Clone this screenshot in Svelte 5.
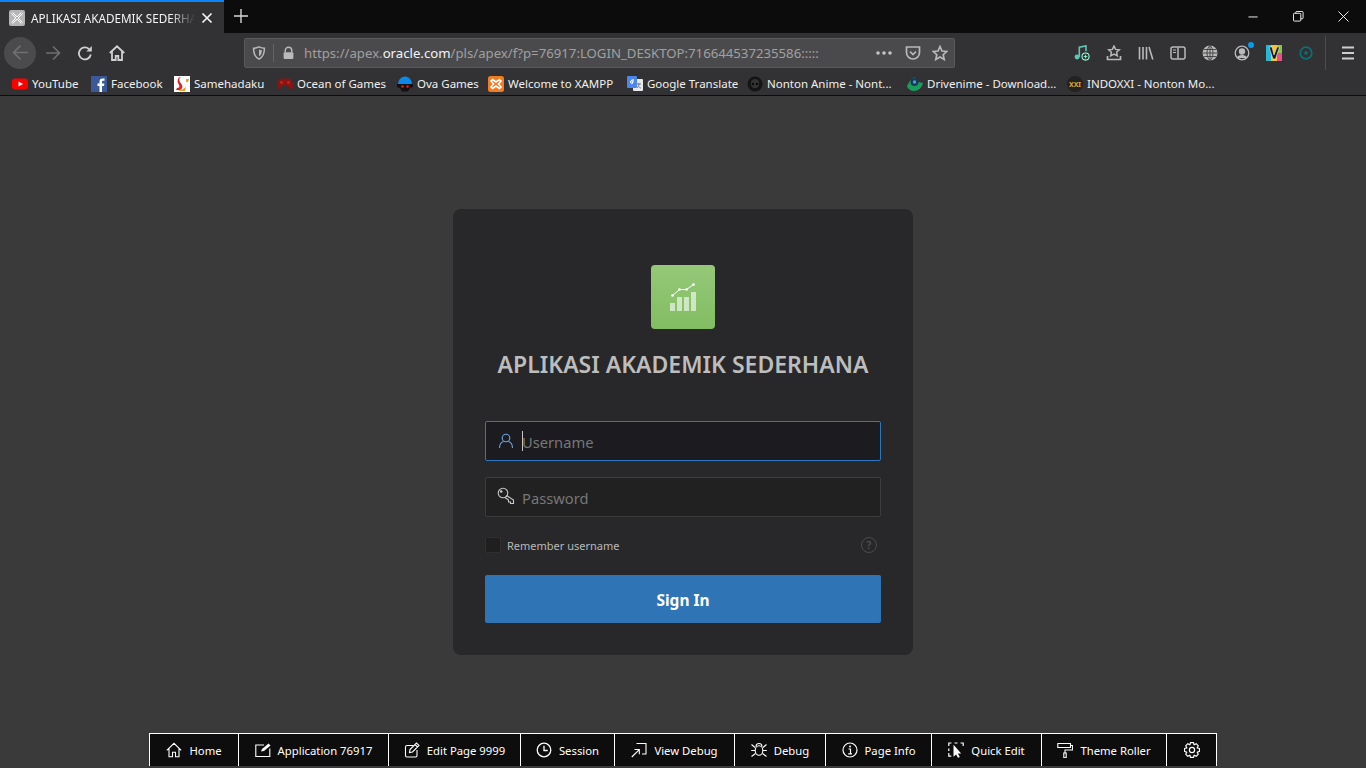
<script>
  const bookmarks = [
    { id: 'yt', name: 'YouTube', w: 67 },
    { id: 'fb', name: 'Facebook', w: 71 },
    { id: 'sm', name: 'Samehadaku', w: 91 },
    { id: 'og', name: 'Ocean of Games', w: 108 },
    { id: 'ova', name: 'Ova Games', w: 79 },
    { id: 'xa', name: 'Welcome to XAMPP', w: 127 },
    { id: 'gt', name: 'Google Translate', w: 108 },
    { id: 'na', name: 'Nonton Anime - Nont...', w: 148 },
    { id: 'dr', name: 'Drivenime - Download...', w: 148 },
    { id: 'xx', name: 'INDOXXI - Nonton Mo...', w: 148 },
  ];

  const devItems = [
    { id: 'home', name: 'Home', w: 89 },
    { id: 'app', name: 'Application 76917', w: 150 },
    { id: 'edit', name: 'Edit Page 9999', w: 132 },
    { id: 'session', name: 'Session', w: 94 },
    { id: 'view', name: 'View Debug', w: 120 },
    { id: 'debug', name: 'Debug', w: 91 },
    { id: 'info', name: 'Page Info', w: 106 },
    { id: 'quick', name: 'Quick Edit', w: 110 },
    { id: 'theme', name: 'Theme Roller', w: 125 },
    { id: 'gear', name: '', w: 50 },
  ];

  // outline of the settings cog, 8 teeth
  function gearPath() {
    const pts = [];
    for (let i = 0; i < 8; i++) {
      const a = (i * Math.PI) / 4 - Math.PI / 2;
      const step = 0.2;
      [[-0.38, 5.6], [-step, 7.6], [step, 7.6], [0.38, 5.6]].forEach(([da, r]) => {
        pts.push(`${(8 + r * Math.cos(a + da)).toFixed(2)} ${(8 + r * Math.sin(a + da)).toFixed(2)}`);
      });
    }
    return 'M' + pts.join('L') + 'z';
  }
</script>

{#snippet favicon(id)}
  <svg class="fav" viewBox="0 0 16 16">
    {#if id === 'yt'}
      <rect x="0" y="2.500" width="16" height="11" rx="3" fill="#f00" />
      <path d="M6.500 5.500 11 8l-4.500 2.500z" fill="#fff" />
    {:else if id === 'fb'}
      <rect width="16" height="16" fill="#3b5998" />
      <path d="M11 16v-6h2l.4-2.500H11V6c0-.8.3-1.200 1.200-1.200h1.300V2.500c-.5 0-1.200-.1-2-.1-1.900 0-3 1.100-3 3.200v1.900H6.500V10h2v6z" fill="#fff" />
    {:else if id === 'sm'}
      <rect width="16" height="16" fill="#fff" />
      <path d="M14 1H8C5 1 5 4 6 6l2 3c1 2 0 4-2 5H2l1-2c2 0 3-1 2-3L4 7c-1-3 0-6 3-6z" fill="#d22" />
      <path d="M12 3h3l-1 3h-2zM9 13l3-2-1 4H4z" fill="#e8a020" />
    {:else if id === 'og'}
      <path d="M4 2.500h8c2.500 0 4 5 4 8.500 0 2.500-2 2.500-3.500 1L10.500 10h-5L3.500 12C2 13.500 0 13.500 0 11c0-3.500 1.500-8.500 4-8.500z" fill="#8a1414" />
      <circle cx="4.500" cy="6.500" r="1.400" fill="#c92020" /><circle cx="11.500" cy="6.500" r="1.400" fill="#c92020" />
    {:else if id === 'ova'}
      <path d="M1 9C1 4 4 .5 8 .5S15 4 15 9z" fill="#0a8ae6" />
      <path d="M0 8h16v3l-3 1-2 3.500H5L3 12l-3-1z" fill="#111" />
      <circle cx="5.500" cy="10.500" r="1.300" fill="#d22" /><circle cx="10.500" cy="10.500" r="1.300" fill="#d22" />
    {:else if id === 'xa'}
      <rect width="16" height="16" rx="2.500" fill="#f37c22" />
      <path d="M4.500 3.500 8 6l3.500-2.500 1.500 1.500L10.500 8l2.500 3-1.500 1.500L8 10l-3.500 2.500L3 11l2.500-3L3 5z" fill="none" stroke="#fff" stroke-width="1.600" />
    {:else if id === 'gt'}
      <rect x="6" y="3" width="10" height="12" rx="1" fill="#e8eaed" />
      <rect width="10" height="12" rx="1" fill="#4a85f0" />
      <path d="M7 5H5v1.500h1C6 8 3.500 8 3.500 6S6 3.500 7 4" fill="none" stroke="#fff" stroke-width="1" />
      <path d="M10 8h4m-2-1v1c0 2-1 3-2 4m1-2c1 1 2 2 3 2" fill="none" stroke="#778" stroke-width="1" />
    {:else if id === 'na'}
      <circle cx="8" cy="8" r="7.500" fill="#141414" />
      <path d="M4 5.500a4.500 4.500 0 0 1 8 0v4L10 12H6L4 9.500z" fill="#333" />
      <circle cx="6" cy="8" r="1.200" fill="#0a0a0a" /><circle cx="10" cy="8" r="1.200" fill="#0a0a0a" />
    {:else if id === 'dr'}
      <path d="M0 10.500C1 8 3 3 8 1c-1 3 1 5 8 6-1 5-5 8-9 8-3 0-6-2-7-4.500z" fill="#1a9c5c" />
      <circle cx="7.500" cy="6" r="4" fill="#163a5c" />
      <circle cx="7.500" cy="6" r="1.700" fill="#5a9ad0" />
    {:else}
      <circle cx="8" cy="8" r="8" fill="#222" />
      <text x="8" y="10.500" class="xxi">XXI</text>
    {/if}
  </svg>
{/snippet}

{#snippet devIcon(id)}
  <svg class="dev-icon" viewBox="0 0 16 16" fill="none" stroke="#fff" stroke-width="1.100">
    {#if id === 'home'}
      <path d="M.8 8.300 8 1.300l7.200 7M3 6.500v8.200h3.500v-4.500h3v4.500H13V6.500" />
    {:else if id === 'app'}
      <path d="M9 3H.8v11.500h14V6.500" />
      <path d="M6 9.500 7 7l6.500-5.500 2 2L9 9l-3 .5z" fill="#fff" stroke="none" />
    {:else if id === 'edit'}
      <path d="M9.500 3.500H3a1.500 1.500 0 0 0-1.500 1.500v8.500A1.500 1.500 0 0 0 3 15h8.500a1.500 1.500 0 0 0 1.500-1.500V8" />
      <path d="M6 7.500 12.500 1l2.500 2.500-6.500 6.500-3 .5zM11 2.500 13.500 5" />
    {:else if id === 'session'}
      <circle cx="8" cy="8" r="6.800" stroke-width="1.300" />
      <path d="M8 3.800V8.500h3.700" stroke-width="1.300" />
    {:else if id === 'view'}
      <path d="M5.500 1.500h9.500v10.500h-4" />
      <path d="M.8 15 8 7.800M3.500 7.500H8.300v4.800" />
    {:else if id === 'debug'}
      <ellipse cx="8" cy="8.500" rx="3.800" ry="4.800" />
      <path d="M5 4.500a3 3 0 0 1 6 0M.5 2.500 4 5.500M15.500 2.500 12 5.500M.2 8.500h3.800M15.800 8.500H12M.5 14.500 4.500 11.500M15.500 14.500l-4-3" />
    {:else if id === 'info'}
      <circle cx="8" cy="8" r="7" stroke-width="1.200" />
      <path d="M6.500 7h2v4.500M6.200 11.800h3.800" stroke-width="1.200" />
      <circle cx="8" cy="4.500" r="1" fill="#fff" stroke="none" />
    {:else if id === 'quick'}
      <path d="M.8 4V1h2.700M6.500 1h3M12.500 1h2.700v3M.8 6.500v2.500M.8 11v3.200h2.500" stroke-width="1.200" />
      <path d="M5.500 2.800v12l2.600-2.400 1.900 3.400 1.800-.9-1.900-3.300h3.300z" fill="#fff" stroke="none" />
    {:else if id === 'theme'}
      <path d="M.8 1.500h12.700v4H.8zM13.500 3.500h2V8H8v3" />
      <rect x="6.800" y="11" width="2.400" height="4.700" />
    {:else}
      <path d={gearPath()} stroke-width="1.200" stroke-linejoin="round" />
      <circle cx="8" cy="8" r="2.600" stroke-width="1.200" />
    {/if}
  </svg>
{/snippet}

<div class="page">
  <div class="tabstrip">
    <div class="tab">
      <svg class="fav" viewBox="0 0 16 16">
        <rect width="16" height="16" rx="2" fill="#b5b5b6" />
        <path d="M3 3l10 10M13 3 3 13" stroke="#fff" stroke-width="2.400" />
        <path d="M3 3l10 10M13 3 3 13" stroke="#8f8f90" stroke-width=".7" />
      </svg>
      <span class="tab-title">APLIKASI AKADEMIK SEDERHANA</span>
      <svg class="tab-close" viewBox="0 0 12 12" stroke="#f4f4f4" stroke-width="1.700"><path d="M1.500 1.500l9 9M10.500 1.500l-9 9" /></svg>
    </div>
    <svg class="new-tab" viewBox="0 0 14 14" stroke="#d8d8d8" stroke-width="1.400"><path d="M7 0v14M0 7h14" /></svg>
    <div class="win-btns">
      <svg viewBox="0 0 12 12" stroke="#fff" stroke-width="1"><path d="M.5 6.500h10" /></svg>
      <svg viewBox="0 0 12 12" fill="none" stroke="#fff" stroke-width="1"><rect x=".5" y="2.500" width="8" height="8.500" rx="1" /><path d="M3 2.500V1.500a1 1 0 0 1 1-1h6a1 1 0 0 1 1 1v6a1 1 0 0 1-1 1H8.500" /></svg>
      <svg viewBox="0 0 12 12" stroke="#fff" stroke-width="1"><path d="M.5.500l11 11M11.500.500l-11 11" /></svg>
    </div>
  </div>

  <div class="navbar">
    <div class="back">
      <svg viewBox="0 0 16 16" fill="none" stroke="#6f6f71" stroke-width="1.600"><path d="M15 8H1.500M8 1.500 1.500 8 8 14.500" /></svg>
    </div>
    <svg class="nav-icon fwd" viewBox="0 0 16 16" fill="none" stroke="#6f6f71" stroke-width="1.600"><path d="M1 8h13.500M8 1.500 14.500 8 8 14.500" /></svg>
    <svg class="nav-icon reload" viewBox="0 0 16 16" fill="none" stroke="#cfcfd0" stroke-width="1.800"><path d="M13.800 9.500A6 6 0 1 1 12 4" /><path d="M14.800 1v5.500H9.300z" fill="#cfcfd0" stroke="none" /></svg>
    <svg class="nav-icon home" viewBox="0 0 16 16" fill="none" stroke="#cfcfd0" stroke-width="1.800"><path d="M.8 8 8 1.300 15.200 8M3 6.500V15h3.700v-4h2.600v4H13V6.500" /></svg>

    <div class="urlbar">
      <svg class="shield" viewBox="0 0 16 16" fill="none" stroke="#b9b9ba" stroke-width="1.700"><path d="M8 1c2 1 4 1.500 6.200 1.500 0 6-1.200 10-6.200 12.500C3 12.500 1.800 8.500 1.800 2.500 4 2.500 6 2 8 1z" /><path d="M8 4c1 .5 2.200.8 3.300.8 0 3-.8 5.500-3.300 7z" fill="#b9b9ba" stroke="none" /></svg>
      <span class="url-sep"></span>
      <svg class="lock" viewBox="0 0 16 16"><path d="M4 7V5a4 4 0 0 1 8 0v2" fill="none" stroke="#b9b9ba" stroke-width="1.800" /><rect x="2" y="7" width="12" height="8.500" rx="1.200" fill="#b9b9ba" /></svg>
      <span class="url">https://apex.<b>oracle.com</b>/pls/apex/f?p=76917:LOGIN_DESKTOP:716644537235586:::::</span>
      <svg class="url-dots" viewBox="0 0 16 4" fill="#c4c4c5"><circle cx="2" cy="2" r="1.800" /><circle cx="8" cy="2" r="1.800" /><circle cx="14" cy="2" r="1.800" /></svg>
      <svg class="pocket" viewBox="0 0 16 16" fill="none" stroke="#b9b9ba" stroke-width="1.700"><path d="M1.500 2h13v5.500a6.500 6.500 0 0 1-13 0z" /><path d="M5 6.500 8 9.500l3-3" /></svg>
      <svg class="star" viewBox="0 0 16 16" fill="none" stroke="#b9b9ba" stroke-width="1.700"><path d="M8 1.500l2 4.500 4.800.5-3.600 3.200 1 4.800L8 12.100l-4.200 2.400 1-4.800L1.200 6.500 6 6z" /></svg>
    </div>

    <div class="extensions">
      <svg viewBox="0 0 18 18" fill="none" stroke="#62c4b4" stroke-width="1.800"><path d="M6 13.500V2.500l7.500-1.500v6" /><circle cx="3.500" cy="13.500" r="2.800" fill="#62c4b4" stroke="none" /><circle cx="13" cy="13" r="4" stroke="#9fd" stroke-width="1.200" /><path d="M11 13h4M13 11v4" stroke="#9fd" stroke-width="1" /></svg>
      <svg viewBox="0 0 16 16" fill="none" stroke="#b9b9ba" stroke-width="1.500"><path d="M8 1l1.600 3.400 3.700.4-2.700 2.500.7 3.600L8 9.200l-3.300 1.700.7-3.600-2.700-2.500 3.700-.4z" /><path d="M1.500 11v3.500h13V11" stroke-width="1.700" /></svg>
      <svg viewBox="0 0 16 16" fill="none" stroke="#b9b9ba" stroke-width="1.600"><path d="M1.500 2v12.500M5 2v12.500M8.500 2v12.500M11 2l3.800 12.500" /></svg>
      <svg viewBox="0 0 16 16" fill="none" stroke="#b9b9ba" stroke-width="1.500"><rect x="1" y="2" width="14" height="12" rx="2" /><path d="M8 2.500v11" /><path d="M3 5h3M3 7.500h3" stroke-width="1.200" /></svg>
      <svg viewBox="0 0 16 16"><circle cx="8" cy="8" r="7.500" fill="#b9b9ba" /><path d="M.5 8h15M1.800 4.500h12.400M1.800 11.500h12.400M8 .5v15M8 .5C4 4 4 12 8 15.500M8 .5c4 3.500 4 11.500 0 15" fill="none" stroke="#323234" stroke-width=".8" /></svg>
      <span class="account">
        <svg viewBox="0 0 16 16" fill="none" stroke="#b9b9ba" stroke-width="1.300"><circle cx="8" cy="8" r="6.800" /><circle cx="8" cy="6.500" r="2.500" fill="#b9b9ba" /><path d="M3.500 13c1-3 8-3 9 0" fill="#b9b9ba" /></svg>
        <span class="badge"></span>
      </span>
      <svg viewBox="0 0 16 16"><rect width="16" height="16" rx="1.500" fill="#f5c42c" /><path d="M0 0h5v16H1.500A1.500 1.500 0 0 1 0 14.500z" fill="#29b6d6" /><path d="M11 0h5v8h-5z" fill="#8bc34a" /><path d="M11 8h5v6.500a1.500 1.500 0 0 1-1.500 1.500H11z" fill="#e8508c" /><path d="M3 2h3l2 8 3-8h2.500L9.500 14H7z" fill="#1b1b1b" stroke="#fff" stroke-width=".5" /></svg>
      <svg viewBox="0 0 16 16" fill="none" stroke="#0b6e78" stroke-width="1.700"><circle cx="8" cy="8" r="5.800" /><circle cx="8" cy="8" r="1.800" fill="#0b6e78" stroke="none" /></svg>
    </div>
    <span class="nav-sep"></span>
    <svg class="menu" viewBox="0 0 14 14" stroke="#cfcfd0" stroke-width="2"><path d="M1 1.500h12M1 7h12M1 12.500h12" /></svg>
  </div>

  <div class="bookmarks">
    {#each bookmarks as b}
      <div class="bookmark" style="width: {b.w}px">
        {@render favicon(b.id)}
        <span>{b.name}</span>
      </div>
    {/each}
  </div>

  <main class="content">
    <div class="card">
      <div class="logo">
        <svg viewBox="0 0 64 64">
          <g fill="#fff" fill-opacity=".6">
            <rect x="19" y="38" width="5" height="8" />
            <rect x="26" y="32" width="5" height="14" />
            <rect x="33" y="32" width="5" height="14" />
            <rect x="40" y="27" width="5" height="19" />
          </g>
          <path d="M21.500 30.500l7-6h7l7-5" fill="none" stroke="#fff" stroke-width="1" />
          <g fill="#fff">
            <circle cx="21.500" cy="30.500" r="1.300" /><circle cx="28.500" cy="24.500" r="1.300" /><circle cx="35.500" cy="24.500" r="1.300" /><circle cx="42.500" cy="19.500" r="1.300" />
          </g>
        </svg>
      </div>
      <h1>APLIKASI AKADEMIK SEDERHANA</h1>

      <div class="field focused">
        <svg viewBox="0 0 16 16" fill="none" stroke="#6ea6e0" stroke-width="1.100"><circle cx="8" cy="5" r="3.800" /><path d="M1.500 15c0-4 2.500-6 4-6.500M14.500 15c0-4-2.500-6-4-6.500" /></svg>
        <span class="caret"></span>
        <span class="placeholder">Username</span>
      </div>
      <div class="field">
        <svg class="key" viewBox="0 0 18 18" fill="none" stroke="#c9c9c9" stroke-width="1.100"><circle cx="6" cy="6" r="4.800" /><circle cx="4.200" cy="4.500" r=".8" fill="#c9c9c9" /><path d="M9.500 8.500 16.500 13v3.500h-3V15h-2v-2L8 10.500" /></svg>
        <span class="placeholder">Password</span>
      </div>

      <div class="remember">
        <span class="check"></span>
        <span class="remember-label">Remember username</span>
        <span class="help">?</span>
      </div>

      <button class="signin">Sign In</button>
    </div>
  </main>

  <div class="devbar">
    {#each devItems as item}
      <div class="dev-item" style="width: {item.w}px">
        {@render devIcon(item.id)}
        {#if item.name}<span>{item.name}</span>{/if}
      </div>
    {/each}
  </div>
</div>

<style>
  :global(body) {
    margin: 0;
    overflow: hidden;
  }

  .page {
    position: relative;
    display: flex;
    flex-direction: column;
    height: 768px;
    background: #3a3a3a;
    font-family: 'Noto Sans', sans-serif;
    color: #f0f0f0;
    overflow: hidden;
  }

  .fav {
    flex: none;
    width: 16px;
    height: 16px;
  }

  .xxi {
    fill: #e0a92c;
    font-size: 7px;
    font-weight: 700;
    text-anchor: middle;
  }

  /* tab strip */
  .tabstrip {
    display: flex;
    align-items: stretch;
    height: 33px;
    background: #0c0c0d;
  }

  .tab {
    display: flex;
    align-items: center;
    box-sizing: border-box;
    width: 224px;
    padding: 0 11px 0 9px;
    gap: 6px;
    background: #323234;
    border-top: 2px solid #0a84ff;
  }

  .tab-title {
    flex: 1;
    overflow: hidden;
    white-space: nowrap;
    font-size: 11.700px;
    color: #f4f4f4;
    -webkit-mask-image: linear-gradient(90deg, #000 85%, transparent);
    mask-image: linear-gradient(90deg, #000 85%, transparent);
  }

  .tab-close {
    flex: none;
    width: 12px;
    height: 12px;
  }

  .new-tab {
    flex: none;
    align-self: center;
    width: 14px;
    height: 14px;
    margin: 0 0 1px 10px;
  }

  .win-btns {
    display: flex;
    align-items: center;
    gap: 34px;
    margin-left: auto;
    padding: 0 17px 1px 0;
  }

  .win-btns svg {
    width: 11px;
    height: 11px;
  }

  /* nav bar */
  .navbar {
    display: flex;
    align-items: center;
    height: 39px;
    background: #323234;
  }

  .back {
    display: flex;
    align-items: center;
    justify-content: center;
    flex: none;
    width: 32px;
    height: 32px;
    margin-left: 4px;
    border-radius: 50%;
    background: #4b4b4d;
  }

  .back svg {
    width: 17px;
    height: 17px;
  }

  .nav-icon {
    flex: none;
    width: 16px;
    height: 16px;
  }

  .fwd {
    margin-left: 9px;
  }

  .reload {
    margin-left: 16px;
  }

  .home {
    margin-left: 16px;
  }

  .urlbar {
    display: flex;
    align-items: center;
    box-sizing: border-box;
    flex: none;
    width: 711px;
    height: 30px;
    margin-left: 119px;
    padding: 0 6px 0 7px;
    background: #4a4a4c;
    border: 1px solid #5a5a5c;
    border-radius: 2px;
  }

  .shield {
    flex: none;
    width: 14px;
    height: 14px;
  }

  .url-sep {
    flex: none;
    width: 1px;
    height: 18px;
    margin: 0 8px 0 7px;
    background: #636365;
  }

  .lock {
    flex: none;
    width: 13px;
    height: 14px;
    margin-right: 9px;
  }

  .url {
    flex: 1;
    overflow: hidden;
    white-space: nowrap;
    font-size: 13.200px;
    color: #a0a0a1;
  }

  .url b {
    font-weight: 400;
    color: #f4f4f4;
  }

  .url-dots {
    flex: none;
    width: 16px;
    height: 4px;
    margin-right: 13px;
  }

  .pocket,
  .star {
    flex: none;
    width: 16px;
    height: 16px;
  }

  .star {
    margin-left: 11px;
  }

  .extensions {
    display: flex;
    align-items: center;
    gap: 16px;
    margin-left: 119px;
  }

  .extensions > svg,
  .account svg {
    display: block;
    width: 16px;
    height: 16px;
  }

  .account {
    position: relative;
  }

  .badge {
    position: absolute;
    top: -3px;
    right: -4px;
    width: 6px;
    height: 6px;
    border-radius: 50%;
    background: #0a9be8;
  }

  .nav-sep {
    flex: none;
    width: 1px;
    height: 34px;
    margin-left: 11px;
    background: #4d4d4f;
  }

  .menu {
    flex: none;
    width: 14px;
    height: 14px;
    margin-left: 15px;
  }

  /* bookmarks */
  .bookmarks {
    display: flex;
    align-items: center;
    box-sizing: border-box;
    gap: 12px;
    height: 24px;
    padding-left: 12px;
    background: #323234;
    border-bottom: 1px solid #0c0c0d;
  }

  .bookmark {
    display: flex;
    align-items: center;
    flex: none;
    gap: 4px;
    white-space: nowrap;
    font-size: 11.500px;
    color: #f0f0f0;
  }

  /* login */
  .content {
    flex: 1;
    display: flex;
    align-items: center;
    justify-content: center;
  }

  .card {
    display: flex;
    flex-direction: column;
    box-sizing: border-box;
    width: 460px;
    height: 446px;
    padding: 56px 32px 32px;
    background: #28282a;
    border-radius: 8px;
  }

  .logo {
    align-self: center;
    width: 64px;
    height: 64px;
    border-radius: 4px;
    background: linear-gradient(#95c878, #82bd62);
  }

  .logo svg {
    display: block;
    width: 64px;
    height: 64px;
  }

  h1 {
    margin: 21px 0 43px;
    font-size: 23px;
    line-height: 28px;
    font-weight: 600;
    text-align: center;
    white-space: nowrap;
    color: #bdbdbd;
  }

  .field {
    display: flex;
    align-items: center;
    box-sizing: border-box;
    height: 40px;
    margin-bottom: 16px;
    padding-left: 12px;
    background: #212121;
    border: 1px solid #3c3c3c;
    border-radius: 2px;
  }

  .field svg {
    flex: none;
    width: 16px;
    height: 16px;
    margin-right: 8px;
  }

  .field svg.key {
    width: 18px;
    height: 18px;
    margin: -3px 7px 0 -1px;
  }

  .field.focused {
    background: #1c1c20;
    border-color: #2b77c0;
  }

  .placeholder {
    padding-top: 2px;
    font-size: 14.700px;
    color: #777;
  }

  .caret {
    width: 1px;
    height: 20px;
    margin-right: -1px;
    background: #c8c8c8;
  }

  .remember {
    display: flex;
    align-items: center;
    height: 24px;
  }

  .check {
    box-sizing: border-box;
    width: 16px;
    height: 16px;
    border: 1px solid #2f2f2f;
    border-radius: 2px;
    background: #1f1f1f;
  }

  .remember-label {
    margin-left: 6px;
    font-size: 11px;
    color: #b8b8b8;
  }

  .help {
    display: flex;
    align-items: center;
    justify-content: center;
    box-sizing: border-box;
    width: 16px;
    height: 16px;
    margin: 0 4px 0 auto;
    border: 1.500px solid #4b4b4d;
    border-radius: 50%;
    font-size: 10px;
    font-weight: 700;
    color: #4b4b4d;
  }

  .signin {
    height: 48px;
    margin-top: 18px;
    padding: 1px 0 0;
    border: none;
    border-radius: 2px;
    background: #2f74b5;
    color: #fff;
    font-family: inherit;
    font-size: 15.500px;
    font-weight: 700;
  }

  /* apex developer toolbar */
  .devbar {
    position: absolute;
    left: 149px;
    bottom: 2px;
    display: flex;
    height: 33px;
    background: #0d0d0d;
    border-top: 1px solid #fff;
    border-right: 1px solid #fff;
    box-sizing: border-box;
  }

  .dev-item {
    display: flex;
    align-items: center;
    justify-content: center;
    box-sizing: border-box;
    gap: 7px;
    border-left: 1px solid #fff;
    font-size: 11.300px;
    white-space: nowrap;
    color: #fff;
  }

  .dev-icon {
    flex: none;
    width: 16px;
    height: 16px;
  }
</style>
